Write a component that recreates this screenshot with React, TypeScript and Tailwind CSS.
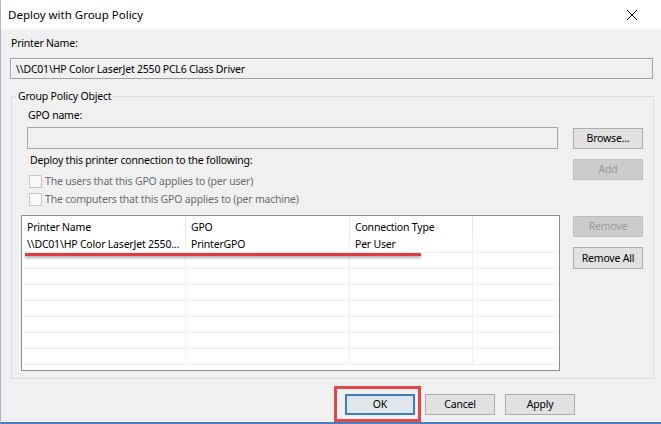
import React from "react";

const font = { fontFamily: '"Noto Sans", "Liberation Sans", sans-serif' };

function Btn({
  children,
  disabled,
  className = "",
}: {
  children: React.ReactNode;
  disabled?: boolean;
  className?: string;
}) {
  return (
    <div
      className={
        "flex h-[21px] w-[70px] items-center justify-center border text-[10.5px] leading-none tracking-[-0.2px] " +
        (disabled
          ? "border-[#bfbfbf] bg-[#cccccc] text-[#9a9a9a]"
          : "border-[#adadad] bg-[#e1e1e1] text-black") +
        " " +
        className
      }
    >
      {children}
    </div>
  );
}

function Check({ label }: { label: string }) {
  return (
    <div className="flex h-[16px] items-center">
      <div className="ml-[2px] h-[13px] w-[13px] border border-[#c6c6c6] bg-[#f8f8f8]" />
      <span className="ml-[3px] text-[10.5px] leading-[16px] tracking-[-0.2px] text-[#6d6d6d]">{label}</span>
    </div>
  );
}

const rows = [
  ["\\\\DC01\\HP Color LaserJet 2550...", "PrinterGPO", "Per User"],
  ["", "", ""],
  ["", "", ""],
  ["", "", ""],
  ["", "", ""],
  ["", "", ""],
  ["", "", ""],
  ["", "", ""],
];

function ListView() {
  return (
    <div className="relative h-[156px] w-[539px] overflow-hidden border border-[#8f8f8f] bg-white">
      <div className="grid h-[21px] grid-cols-[164px_164px_123px_1fr] text-[10.5px] leading-[16px] tracking-[-0.2px] text-black">
        <div className="flex items-center border-r border-[#e8e8e8] pl-[5px]">Printer Name</div>
        <div className="flex items-center border-r border-[#e8e8e8] pl-[5px]">GPO</div>
        <div className="flex items-center border-r border-[#e8e8e8] pl-[5px]">Connection Type</div>
        <div />
      </div>
      {rows.map((r, i) => (
        <div
          key={i}
          className="grid h-[16px] grid-cols-[164px_164px_123px_1fr] border-b border-[#f0f0f0] text-[10.5px] leading-[15px] tracking-[-0.2px] text-black"
        >
          <div className="overflow-hidden whitespace-nowrap border-r border-[#f0f0f0] pl-[5px]">{r[0]}</div>
          <div className="overflow-hidden whitespace-nowrap border-r border-[#f0f0f0] pl-[5px]">{r[1]}</div>
          <div className="overflow-hidden whitespace-nowrap border-r border-[#f0f0f0] pl-[5px]">{r[2]}</div>
          <div />
        </div>
      ))}
      <div className="absolute left-[3px] top-[37px] h-[3px] w-[396px] bg-[#e23a3e] shadow-[0_2px_3px_rgba(0,0,0,0.35)]" />
    </div>
  );
}

export default function App() {
  return (
    <div
      style={font}
      className="flex h-[424px] w-[661px] flex-col overflow-hidden border-b-2 border-l border-b-[#4a7fbd] border-l-[#a9b7c8] bg-[#f0f0f0] text-black"
    >
      {/* title bar */}
      <div className="flex h-[29px] shrink-0 items-center justify-between bg-white pl-[7px] pr-[23px]">
        <span className="text-[11.5px] leading-[16px] text-black">Deploy with Group Policy</span>
        <svg width="12" height="12" viewBox="0 0 12 12" className="mt-[1px]">
          <path d="M1 1 L11 11 M11 1 L1 11" stroke="#111" strokeWidth="1" fill="none" />
        </svg>
      </div>

      {/* body */}
      <div className="flex flex-col pl-[9px] pr-[7px] text-[10.5px] tracking-[-0.2px]">
        <div className="ml-[1px] mt-[6px] leading-[16px]">Printer Name:</div>
        <div className="mt-[7px] mr-[1px] flex h-[21px] items-center border border-[#a0a0a0] bg-[#f0f0f0] pl-[5px] leading-[16px] shadow-[inset_1px_1px_0_#ffffff]">
          \\DC01\HP Color LaserJet 2550 PCL6 Class Driver
        </div>

        <fieldset className="ml-[1px] mt-[9px] h-[291px] border border-[#dcdcdc]">
          <legend className="ml-[4px] px-[2px] leading-[16px]">Group Policy Object</legend>
          <div className="flex">
            <div className="flex flex-col pl-[9px]">
              <div className="flex flex-col pl-[6px]">
                <div className="ml-[1px] mt-[3px] leading-[16px]">GPO name:</div>
                <div className="mt-[4px] h-[22px] w-[531px] border border-[#a6a6a6] bg-[#f0f0f0]" />
                <div className="ml-[3px] mt-[3px] leading-[16px]">
                  Deploy this printer connection to the following:
                </div>
                <div className="mt-[5px] flex flex-col gap-[2px]">
                  <Check label="The users that this GPO applies to (per user)" />
                  <Check label="The computers that this GPO applies to (per machine)" />
                </div>
              </div>
              <div className="mt-[8px]">
                <ListView />
              </div>
            </div>
            <div className="ml-[13px] flex flex-col pt-[24px]">
              <Btn>Browse...</Btn>
              <Btn disabled className="mt-[10px]">
                Add
              </Btn>
              <Btn disabled className="mt-[36px]">
                Remove
              </Btn>
              <Btn className="mt-[10px] h-[22px]">Remove All</Btn>
            </div>
          </div>
        </fieldset>
      </div>

      {/* bottom buttons */}
      <div className="mt-auto mb-[7px] flex justify-end gap-[10px] pr-[86px]">
        <div className="relative">
          <div className="flex h-[21px] w-[70px] items-center justify-center border-2 border-[#3b7cc4] bg-[#e1e6ec] text-[10.5px] leading-none tracking-[-0.2px]">
            OK
          </div>
          <div className="absolute left-[-11px] top-[-8px] h-[36px] w-[87px] border-[3px] border-[#e1474b]" />
        </div>
        <Btn>Cancel</Btn>
        <Btn>Apply</Btn>
      </div>
    </div>
  );
}
